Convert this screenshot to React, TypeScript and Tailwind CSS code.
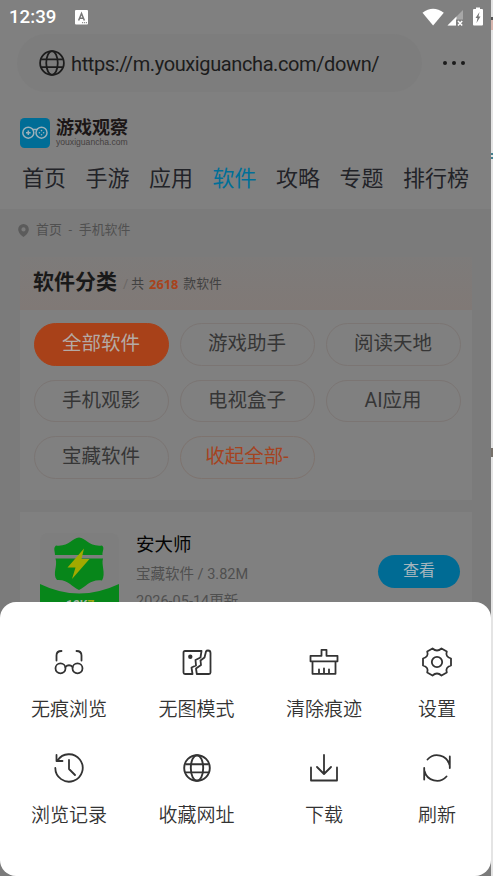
import React from "react";

const cjk = "font-['Roboto','Noto_Sans_CJK_SC',sans-serif]";

function Globe({ className, sw = 1.8 }: { className: string; sw?: number }) {
  return (
    <svg className={className} viewBox="0 0 28 28" fill="none" stroke="currentColor" strokeWidth={sw}>
      <circle cx="14" cy="14" r="12.8" />
      <ellipse cx="14" cy="14" rx="6.2" ry="12.8" />
      <path d="M2.3 10.2h23.4M2.3 18.4h23.4" />
    </svg>
  );
}

function StatusBar() {
  return (
    <div className="flex h-[34px] items-center pl-[9px] pr-[7px] text-white">
      <span className="w-[66px] text-[18.7px] font-medium leading-none">12:39</span>
      <svg className="h-[15px] w-[13px]" viewBox="0 0 13 15">
        <rect width="13" height="14.5" rx="1" fill="#fff" />
        <path d="M3.6 10.5 6.5 3.5l2.9 7M4.6 8.2h3.8" fill="none" stroke="#777" strokeWidth="1.5" />
        <path d="M7 12.7h5" stroke="#777" strokeDasharray="1.2 .8" />
      </svg>
      <svg className="ml-auto h-[20px] w-[64px]" viewBox="0 0 64 20">
        <path d="M1 5.2Q11.5-2.8 22.3 5.2L11.6 18z" transform="translate(1.5 .5)" fill="#fff" />
        <path d="M27.5 18.5 43 3v15.5z" fill="#a7a7a7" />
        <path d="M27.5 18.5 36.5 9.5v9z" fill="#fff" />
        <path d="M36 12.5h7.5v7H36z" fill="#808080" />
        <path d="m38 14 4.2 4.5m0-4.5L38 18.500" stroke="#fff" strokeWidth="1.500" />
        <path d="M56 .5h4V2h2q1 0 1 1v14.500q0 1-1 1h-8q-1 0-1-1V3q0-1 1-1h2z" fill="#fff" />
        <path d="m59.500 5-4 6h2l-1 5 4-6.500h-2z" fill="#777" />
      </svg>
    </div>
  );
}

function Logo() {
  return (
    <div className="mt-[26px] flex h-[30px] items-start pl-5">
      <svg className="h-[30px] w-[30px]" viewBox="0 0 30 30" fill="none">
        <rect width="30" height="30" rx="4.5" fill="#006d96" />
        <g stroke="#9db1ba" strokeWidth="1.5">
          <circle cx="8.3" cy="14.7" r="5.5" />
          <circle cx="21.5" cy="14.7" r="5.5" />
          <path d="M12.3 11.5h5.3M6 14.7h4.6M8.3 12.4V17" />
        </g>
        <g fill="#9db1ba">
          <circle cx="21.5" cy="12.6" r=".8" />
          <circle cx="21.5" cy="16.8" r=".8" />
          <circle cx="19.4" cy="14.7" r=".8" />
          <circle cx="23.6" cy="14.7" r=".8" />
        </g>
      </svg>
      <div className="ml-[6px]">
        <div className="pt-px text-[18px] font-bold leading-[18px] text-[#1b1616]">游戏观察</div>
        <div className="pt-px font-['Liberation_Sans',sans-serif] text-[8.6px] leading-[9px] text-[#454141]">youxiguancha.com</div>
      </div>
    </div>
  );
}

const nav = ["首页", "手游", "应用", "软件", "攻略", "专题", "排行榜"];
const categories = ["全部软件", "游戏助手", "阅读天地", "手机观影", "电视盒子", "AI应用", "宝藏软件", "收起全部-"];

function pillStyle(i: number) {
  if (i === 0) return "bg-[#a84119] border-[#a84119] text-[#b5aaa5]";
  if (i === 7) return "border-[#7e736e] text-[#a5431f]";
  return "border-[#7b7573] text-[#363636]";
}

function Page() {
  return (
    <>
      <header className="h-[209px] bg-[#808080]">
        <StatusBar />
        <div className="flex h-[58px] items-center pl-[17px]">
          <div className="flex h-[58px] w-[405px] shrink-0 items-center rounded-full bg-[#7d7d7d] pl-[22px]">
            <Globe className="h-[26px] w-[26px] text-[#1c1c1c]" sw={1.9} />
            <span className="ml-[6px] pt-px text-[20px] leading-none tracking-[-0.39px] text-[#1c1c1c]">https://m.youxiguancha.com/down/</span>
          </div>
          <div className="ml-[21px] flex gap-[5px]">
            <i className="h-1 w-1 rounded-full bg-[#1b1b1b]" />
            <i className="h-1 w-1 rounded-full bg-[#1b1b1b]" />
            <i className="h-1 w-1 rounded-full bg-[#1b1b1b]" />
          </div>
        </div>
        <Logo />
        <nav className="mt-[15px] flex gap-[19.5px] pl-[22px] text-[22px] leading-[31px] text-[#222328]">
          {nav.map((n, i) => (
            <span key={n} className={i === 3 ? "whitespace-nowrap text-[#006f98]" : "whitespace-nowrap"}>{n}</span>
          ))}
        </nav>
      </header>

      <div className="flex h-[48px] items-center pb-[6px] pl-[18px] text-[12.9px] text-[#505050]">
        <svg className="h-[13px] w-[11px]" viewBox="0 0 11 13">
          <path fillRule="evenodd" d="M5.5 0A5.300 5.300 0 0 1 10.800 5.300C10.800 8.500 8 11.500 5.500 13 3 11.500.2 8.500.2 5.300A5.300 5.300 0 0 1 5.500 0zm0 3.300a2.100 2.100 0 1 0 0 4.200 2.100 2.100 0 0 0 0-4.200z" fill="#5b5b5b" />
        </svg>
        <span className="ml-[7px]">首页</span>
        <span className="w-[17px] text-center">-</span>
        <span>手机软件</span>
      </div>

      <section className="mx-5 mr-[19px]">
        <div className="flex h-[53px] items-center bg-linear-to-b from-[#7d7b7a] to-[#807976] pb-[2px] pl-[13px] text-[12.8px] text-[#414141]">
          <h2 className="text-[21px] font-bold text-[#191919]">软件分类</h2>
          <span className="ml-[6px] mt-[3px] text-[#6a6664]">/</span>
          <span className="ml-[3px] mt-[3px]">共</span>
          <b className="mx-[5px] mt-[4px] font-['Open_Sans',sans-serif] text-[12.8px] text-[#a8431c]">2618</b>
          <span className="mt-[3px]">款软件</span>
        </div>
        <div className="grid h-[190px] grid-cols-[135px_135px_135px] content-start gap-x-[11px] gap-y-[14px] bg-[#808080] pl-[13.5px] pt-[13px]">
          {categories.map((c, i) => (
            <div key={c} className={`flex h-[42.5px] items-center justify-center rounded-full border text-[19.5px] leading-[28px] ${pillStyle(i)}`}>{c}</div>
          ))}
        </div>
      </section>

      <section className="ml-5 mr-[19px] mt-3 flex h-[180px] bg-[#808080] pl-5">
        <svg className="mt-[21px] h-[79px] w-[79px] shrink-0" viewBox="0 0 79 79">
          <rect width="79" height="79" rx="8" fill="#7e7e7e" />
          <path d="M39 4.500C46 5 49 14 62 12.500 65 15 62 19 62.500 22H15c0-4-2-7 1-9.500C29 14 32 5 39 4.500z" fill="#07861a" />
          <path d="M15.500 25.500H63c-2 6 3 15-1 22C50 46 46 54 39 57 32 54 28 46 17 47c-5-6 1-14-1.500-21.500z" fill="#07861a" />
          <path d="m44 15.500-16.500 19h8L32 46l17.500-20h-8z" fill="#a3a900" />
          <path d="M0 51Q39 70 79 51v20q0 8-8 8H8q-8 0-8-8z" fill="#07861a" />
          <text x="26" y="76" fontSize="12" fontWeight="700" fill="#a3b3a3" fontFamily="Roboto">12K<tspan fill="#a3a912">7</tspan></text>
        </svg>
        <div className="ml-[17px] pt-[19px]">
          <div className="text-[18.5px] leading-[29px] text-[#050505]">安大师</div>
          <div className="mt-[2px] text-[14.5px] leading-[26px] text-[#4f4f4f]">宝藏软件 / 3.82M</div>
          <div className="text-[14.5px] leading-[27px] text-[#4f4f4f]">2026-05-14更新</div>
        </div>
        <div className="ml-auto mr-3 mt-[43px] flex h-[33px] w-[82px] items-center justify-center rounded-full bg-[#006b94] pb-px text-[16px] text-[#a4b5bd]">查看</div>
      </section>
    </>
  );
}

const icons: Record<string, React.ReactNode> = {
  glasses: <><path d="M2.5 13.5V8.5q0-4.5 5-4.500M22.500 4q5 0 5 4.500v5" /><circle cx="6.500" cy="21.300" r="5" /><circle cx="23.500" cy="21.300" r="5" /><path d="M11.300 20q3.700-3.500 7.400 0" /></>,
  image: <><path d="M19.500 4H3Q1.500 4 1.500 5.500V25.500Q1.500 27 3 27H10.500L9.500 20.500L14 18.500L13.500 13L18.500 10.500Z" /><path d="M24 4.500L22.500 10.500L18.500 13.500L19 18L14 21.500L14.800 27H27Q28.500 27 28.500 25.500V6Q28.500 3.500 26 3.500Q24.500 3.500 24 4.500Z" /><circle cx="8.300" cy="9.800" r="1.300" fill="currentColor" /></>,
  broom: <><path d="M1.500 8.800h11V2.800h5v6h11v5.500h-27zM3.500 14.300v12.500h23V14.300M10 22.300v4.500M15 21.300v5.500M20 22.300v4.500" /></>,
  gear: <><path d="M10.500 1.500Q15 5.500 19.500 1.500L24.800 4.500Q23 9.800 29 11.500V18.500Q23 20.200 24.800 25.500L19.500 28.500Q15 24.500 10.500 28.500L5.200 25.500Q7 20.200 1 18.500V11.500Q7 9.800 5.200 4.500Z" /><circle cx="15" cy="15" r="5.200" /></>,
  history: <><path d="M1.300 15A13.700 13.700 0 1 0 3.500 7.500M2.500 2v6h6M15 7v9l6 6" /></>,
  download: <><path d="M2 14.500V27.500h26V14.500M15 2v18.500M8 14l7 7 7-7" /></>,
  refresh: <><path d="M5.500 6.500A12.800 12.800 0 0 1 27.500 12M27.800 3.500v11.500M24.500 23.500A12.800 12.800 0 0 1 2.500 18M2.200 26.500V15" /></>,
};

const actions = [
  ["glasses", "无痕浏览"], ["image", "无图模式"], ["broom", "清除痕迹"], ["gear", "设置"],
  ["history", "浏览记录"], ["globe", "收藏网址"], ["download", "下载"], ["refresh", "刷新"],
];

function Sheet() {
  return (
    <div className="absolute inset-x-0 top-[602px] h-[274px] rounded-[16px] bg-white">
      <div className="grid grid-cols-[138px_117px_138px_88px] gap-y-[8px] pt-[45px] text-[#333]">
        {actions.map(([icon, label]) => (
          <div key={label} className="flex h-[98px] flex-col items-center">
            {icon === "globe" ? (
              <Globe className="my-px h-[28px] w-[28px]" sw={1.9} />
            ) : (
              <svg className="h-[30px] w-[30px]" viewBox="0 0 30 30" fill="none" stroke="currentColor" strokeWidth="1.8" strokeLinecap="round" strokeLinejoin="round">
                {icons[icon]}
              </svg>
            )}
            <span className="mt-[19px] whitespace-nowrap text-[19px] font-[350] leading-[28px]">{label}</span>
          </div>
        ))}
      </div>
    </div>
  );
}

export default function App() {
  return (
    <div className={`flex h-[876px] w-[493px] overflow-hidden bg-[#e9e9e9] ${cjk}`}>
      <main className="relative h-[876px] w-[491px] overflow-hidden bg-[#7b7b7b]">
        <Page />
        <Sheet />
      </main>
      <aside className="flex w-[2px] flex-col bg-[#e4e4e4]">
        <i className="mt-[17px] h-[3px] bg-[#555]" />
        <i className="h-[10px] bg-[#d9b8b0]" />
        <i className="mt-[123px] h-[2px] bg-[#43808f]" />
        <i className="mt-[2px] h-[2px] bg-[#43808f]" />
        <i className="mt-[289px] h-[9px] bg-[#77716a]" />
      </aside>
    </div>
  );
}
